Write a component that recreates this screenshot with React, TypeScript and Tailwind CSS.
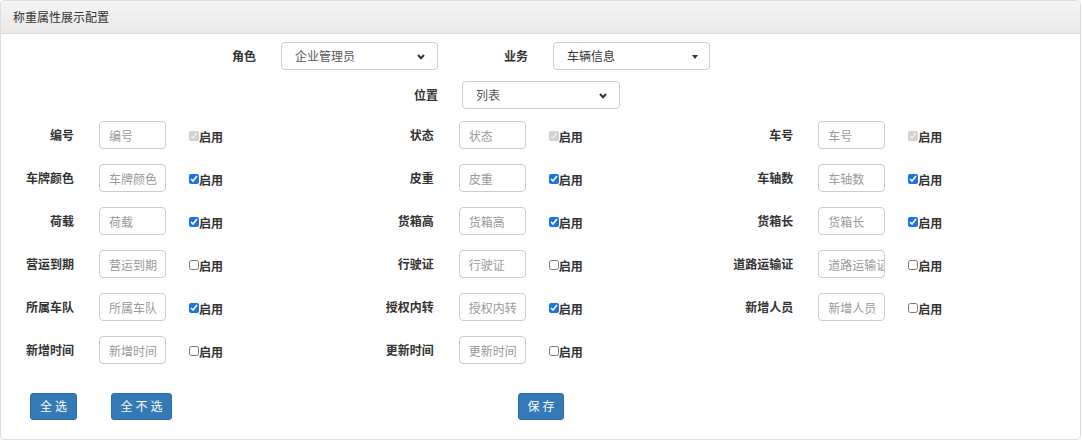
import React from 'react';

type Field = { label: string; checked: boolean; disabled?: boolean };

const rows: Field[][] = [
  [
    { label: '编号', checked: true, disabled: true },
    { label: '状态', checked: true, disabled: true },
    { label: '车号', checked: true, disabled: true },
  ],
  [
    { label: '车牌颜色', checked: true },
    { label: '皮重', checked: true },
    { label: '车轴数', checked: true },
  ],
  [
    { label: '荷载', checked: true },
    { label: '货箱高', checked: true },
    { label: '货箱长', checked: true },
  ],
  [
    { label: '营运到期', checked: false },
    { label: '行驶证', checked: false },
    { label: '道路运输证', checked: false },
  ],
  [
    { label: '所属车队', checked: true },
    { label: '授权内转', checked: true },
    { label: '新增人员', checked: false },
  ],
  [
    { label: '新增时间', checked: false },
    { label: '更新时间', checked: false },
  ],
];

const Chevron = () => (
  <svg width="8" height="6" viewBox="0 0 8 6" className="absolute right-[12px] top-[11px]">
    <path d="M1 1 L4 4.2 L7 1" fill="none" stroke="#333" strokeWidth="2" />
  </svg>
);

const Select: React.FC<{ value: string; width: string; caret?: boolean }> = ({ value, width, caret }) => (
  <div className={`relative h-[28px] ${width} border border-[#ccc] rounded-[4px] bg-white flex items-center pl-[13px] text-[12px] ${caret ? 'text-[#333]' : 'text-[#555]'}`}>
    <span>{value}</span>
    {caret ? (
      <span className="absolute right-[11px] top-[12px] w-0 h-0 border-l-[3px] border-r-[3px] border-t-[4px] border-l-transparent border-r-transparent border-t-[#333]" />
    ) : (
      <Chevron />
    )}
  </div>
);

const FieldCell: React.FC<{ f: Field }> = ({ f }) => (
  <div className="flex items-center h-[28px]">
    <label className="w-[73px] text-right font-bold text-[12px] text-[#333]">{f.label}</label>
    <input
      readOnly
      placeholder={f.label}
      className="ml-[25px] w-[67px] h-[28px] border border-[#ccc] rounded-[4px] pl-[9px] text-[12px] placeholder:text-[#999] outline-none overflow-hidden"
    />
    <label className="ml-[23px] flex items-end font-bold text-[12px] text-[#333] leading-none">
      <input
        type="checkbox"
        readOnly
        checked={f.checked}
        disabled={f.disabled}
        className="w-[10px] h-[10px] m-0 mb-[2px] accent-[#1a73e8]"
      />
      <span className="pt-[3px]">启用</span>
    </label>
  </div>
);

const Btn: React.FC<{ text: string; width: string }> = ({ text, width }) => (
  <button className={`h-[27px] ${width} bg-[#337ab7] border border-[#2e6da4] rounded-[3px] text-white text-[12px] tracking-[3px] pl-[3px]`}>
    {text}
  </button>
);

export default function App() {
  return (
    <div
      className="w-[1082px] h-[441px] bg-white"
      style={{ fontFamily: '"Noto Sans CJK SC", "Noto Sans", sans-serif' }}
    >
      <div className="w-[1081px] h-[440px] border border-[#ddd] rounded-[4px] overflow-hidden flex flex-col">
        <div className="h-[33px] shrink-0 bg-gradient-to-b from-[#f5f5f5] to-[#e8e8e8] border-b border-[#ddd] flex items-center px-[12px] text-[12px] text-[#333]">
          称重属性展示配置
        </div>

        <div className="flex flex-col">
          {/* Top selectors */}
          <div className="flex items-center mt-[8px]">
            <span className="w-[255px] text-right font-bold text-[12px] text-[#333]">角色</span>
            <div className="ml-[25px]">
              <Select value="企业管理员" width="w-[157px]" />
            </div>
            <span className="w-[90px] text-right font-bold text-[12px] text-[#333]">业务</span>
            <div className="ml-[25px]">
              <Select value="车辆信息" width="w-[157px]" caret />
            </div>
          </div>
          <div className="flex items-center mt-[11px]">
            <span className="w-[437px] text-right font-bold text-[12px] text-[#333]">位置</span>
            <div className="ml-[24px]">
              <Select value="列表" width="w-[158px]" />
            </div>
          </div>

          {/* Field grid */}
          <div className="grid grid-cols-3 gap-y-[15px] mt-[12px]">
            {rows.map((row, ri) =>
              [0, 1, 2].map((ci) => (
                <div key={`${ri}-${ci}`} className="h-[28px]">
                  {row[ci] && <FieldCell f={row[ci]} />}
                </div>
              ))
            )}
          </div>

          {/* Buttons */}
          <div className="flex items-center mt-[28px]">
            <div className="ml-[29px]">
              <Btn text="全选" width="w-[47px]" />
            </div>
            <div className="ml-[34px]">
              <Btn text="全不选" width="w-[61px]" />
            </div>
            <div className="ml-[346px]">
              <Btn text="保存" width="w-[46px]" />
            </div>
          </div>
        </div>
      </div>
    </div>
  );
}
